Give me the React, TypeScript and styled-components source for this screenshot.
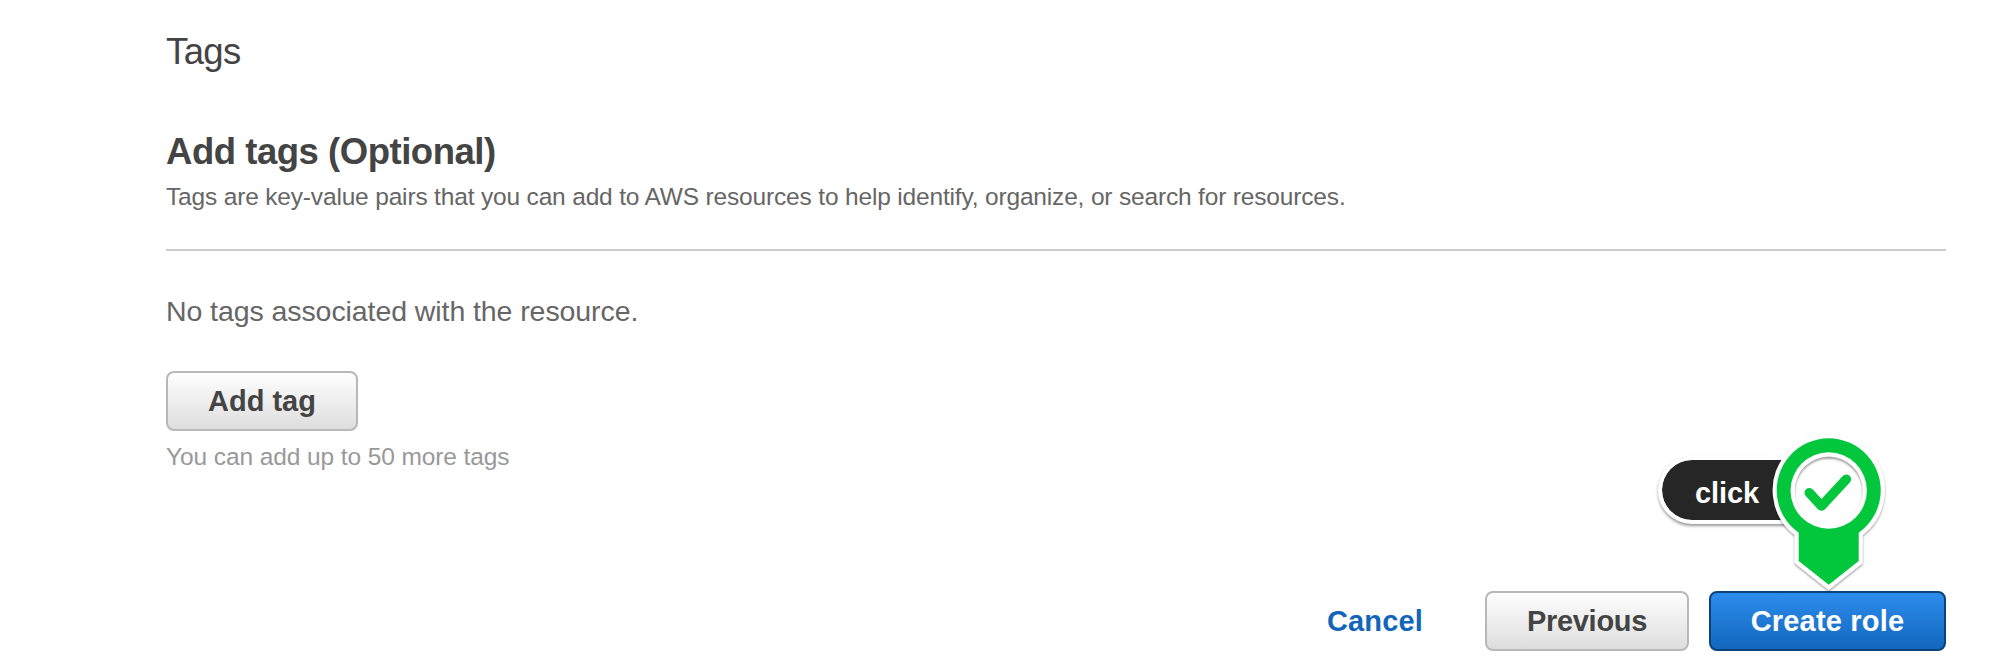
import React from 'react';
import styled, { createGlobalStyle } from 'styled-components';

const GlobalStyle = createGlobalStyle`
  * { box-sizing: border-box; }
  body {
    margin: 0;
    background: #fff;
    font-family: 'Liberation Sans', Arial, Helvetica, sans-serif;
  }
`;

const Page = styled.main`
  display: flex;
  flex-direction: column;
  min-height: 664px;
  padding: 30px 66px 13px 166px;
`;

const StepTitle = styled.h1`
  margin: 0 0 56px;
  font-size: 36.5px;
  font-weight: 400;
  line-height: 44px;
  letter-spacing: -0.6px;
  color: #444;
`;

const SectionHeader = styled.header`
  padding-bottom: 37px;
  border-bottom: 2px solid #ccc;
`;

const SectionTitle = styled.h2`
  margin: 0 0 8px;
  font-size: 36.5px;
  font-weight: 700;
  line-height: 44px;
  letter-spacing: -0.47px;
  color: #444;
`;

const Description = styled.p`
  margin: 0;
  font-size: 24.5px;
  line-height: 30px;
  letter-spacing: -0.17px;
  color: #666;
`;

const TagList = styled.section`
  display: flex;
  flex-direction: column;
  align-items: flex-start;
  padding-top: 42px;
`;

const EmptyMessage = styled.p`
  margin: 0 0 42px;
  font-size: 28.5px;
  line-height: 36px;
  letter-spacing: -0.08px;
  color: #666;
`;

const Hint = styled.p`
  margin: 11px 0 0;
  font-size: 24.5px;
  line-height: 30px;
  letter-spacing: -0.1px;
  color: #999;
`;

const Button = styled.button<{ $primary?: boolean; $width: number; $tracking?: number }>`
  width: ${(p) => p.$width}px;
  height: 60px;
  padding: 0;
  border: 2px solid ${(p) => (p.$primary ? '#0a437c' : '#b8b8b8')};
  border-radius: 8px;
  background: ${(p) =>
    p.$primary
      ? 'linear-gradient(#2e8dee, #1166bb) border-box'
      : 'linear-gradient(#fff, #ddd) border-box'};
  color: ${(p) => (p.$primary ? '#fff' : '#444')};
  font: 700 29px/36px 'Liberation Sans', Arial, Helvetica, sans-serif;
  letter-spacing: ${(p) => p.$tracking ?? 0}px;
  white-space: nowrap;
`;

const Footer = styled.footer`
  position: relative;
  display: flex;
  justify-content: flex-end;
  align-items: center;
  margin-top: 119px;
`;

const CancelLink = styled.a`
  margin-right: 62px;
  font-size: 29px;
  font-weight: 700;
  line-height: 36px;
  letter-spacing: 0.15px;
  color: #1166bb;
`;

const PreviousSlot = styled.div`
  display: flex;
  margin-right: 20px;
`;

/* Callout floating over the primary action */
const Callout = styled.div`
  position: absolute;
  right: 60px;
  bottom: 59px;
  width: 240px;
  height: 168px;
`;

const CalloutLabel = styled.div`
  display: flex;
  align-items: center;
  width: 140px;
  height: 68px;
  margin: 32px 0 0 12px;
  padding: 5px 0 0 33px;
  border: 4px solid #fff;
  border-radius: 34px 0 0 34px;
  background: #262626 padding-box;
  box-shadow: 0 2px 3px rgba(0, 0, 0, 0.4);
  color: #fff;
  font-size: 29px;
  font-weight: 700;
  line-height: 36px;
  letter-spacing: -0.1px;
`;

const Pin = styled.svg`
  position: absolute;
  inset: 0;
  overflow: visible;
`;

function CheckPin() {
  const body =
    'M152.7 108.8 A52 52 0 1 1 212.7 108.8 V137 L182.7 160.8 L152.7 137 Z';
  return (
    <Pin width="240" height="168" viewBox="0 0 240 168">
      <defs>
        <filter id="pinShadow" x="-20%" y="-20%" width="140%" height="140%">
          <feDropShadow dx="0" dy="1.5" stdDeviation="1.2" floodColor="#000" floodOpacity="0.42" />
        </filter>
        <filter id="ringShadow" x="-20%" y="-20%" width="140%" height="140%">
          <feGaussianBlur stdDeviation="0.9" />
        </filter>
        <clipPath id="ringClip">
          <circle cx="182.7" cy="66.5" r="33.9" />
        </clipPath>
      </defs>
      <path d={body} fill="#fff" stroke="#fff" strokeWidth="8" filter="url(#pinShadow)" />
      <path d={body} fill="#02c73c" />
      <circle cx="182.7" cy="66.5" r="38.2" fill="#fff" />
      <g clipPath="url(#ringClip)">
        <circle
          cx="182.7"
          cy="68.5"
          r="35.4"
          fill="none"
          stroke="#000"
          strokeOpacity="0.45"
          strokeWidth="2.6"
          filter="url(#ringShadow)"
        />
      </g>
      <path
        d="M163.3 68.7 L175.5 82 L200.3 55.3"
        fill="none"
        stroke="#02c73c"
        strokeWidth="9.6"
        strokeLinecap="round"
        strokeLinejoin="round"
      />
    </Pin>
  );
}

export default function App() {
  return (
    <>
      <GlobalStyle />
      <Page>
        <StepTitle>Tags</StepTitle>
        <SectionHeader>
          <SectionTitle>Add tags (Optional)</SectionTitle>
          <Description>
            Tags are key-value pairs that you can add to AWS resources to help identify, organize, or
            search for resources.
          </Description>
        </SectionHeader>
        <TagList>
          <EmptyMessage>No tags associated with the resource.</EmptyMessage>
          <Button $width={192}>Add tag</Button>
          <Hint>You can add up to 50 more tags</Hint>
        </TagList>
        <Footer>
          <CancelLink>Cancel</CancelLink>
          <PreviousSlot>
            <Button $width={204} $tracking={-0.3}>Previous</Button>
          </PreviousSlot>
          <Button $primary $width={237} $tracking={0.2}>Create role</Button>
          <Callout>
            <CalloutLabel>click</CalloutLabel>
            <CheckPin />
          </Callout>
        </Footer>
      </Page>
    </>
  );
}
